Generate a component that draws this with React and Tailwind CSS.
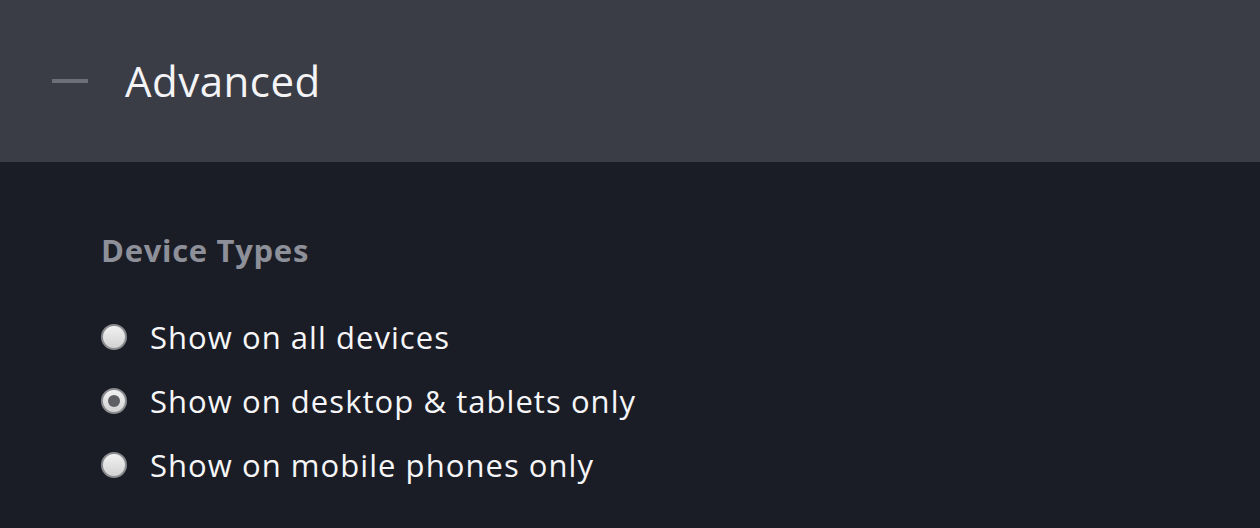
import React, { useState } from "react";

const options = [
  "Show on all devices",
  "Show on desktop & tablets only",
  "Show on mobile phones only",
];

const Radio = ({ checked }) => (
  <span className="relative flex h-[26px] w-[26px] shrink-0 items-center justify-center rounded-full border-2 border-[#8a8b8f] bg-gradient-to-b from-[#f2f2f2] to-[#d2d2d2]">
    {checked && <span className="h-[12px] w-[12px] rounded-full bg-[#5f6064]" />}
  </span>
);

const App = () => {
  const [selected, setSelected] = useState(1);

  return (
    <div
      className="flex h-[528px] w-full flex-col bg-[#1b1d26]"
      style={{ fontFamily: "'Open Sans', Lato, sans-serif" }}
    >
      {/* Header */}
      <div className="flex h-[162px] items-center bg-[#3a3d46] pl-[52px]">
        <span className="h-[4px] w-[36px] bg-[#6c6f79]" />
        <h1 className="ml-[37px] text-[42px] leading-none tracking-[0.5px] text-[#f4f4f6]">Advanced</h1>
      </div>

      {/* Body */}
      <div className="flex flex-col px-[101px] pt-[73px]">
        <h2 className="text-[31px] font-bold leading-none tracking-[0.7px] text-[#8e9099]">Device Types</h2>
        <div className="mt-[54px] flex flex-col gap-[30px]">
          {options.map((label, i) => (
            <button
              key={label}
              onClick={() => setSelected(i)}
              className="flex items-center gap-[23px] text-left"
            >
              <Radio checked={selected === i} />
              <span className="text-[31px] leading-[34px] tracking-[1.05px] text-[#f6f6f8]">{label}</span>
            </button>
          ))}
        </div>
      </div>
    </div>
  );
};

export default App;
